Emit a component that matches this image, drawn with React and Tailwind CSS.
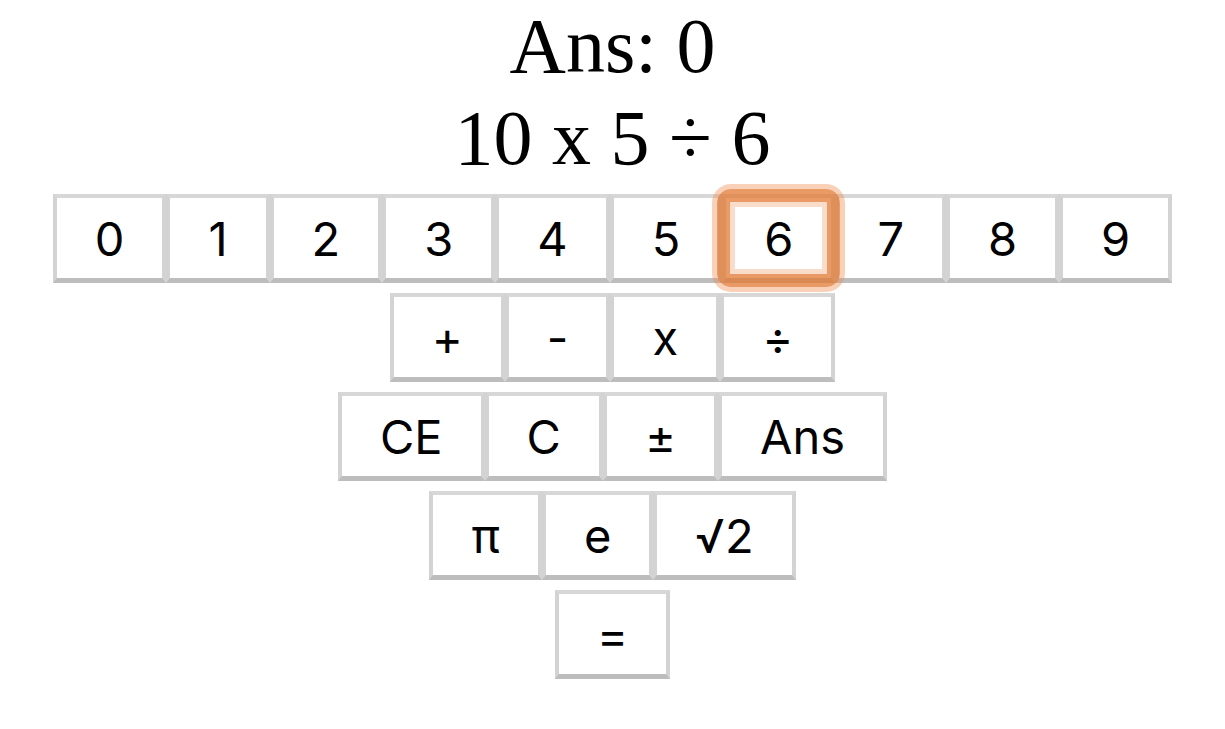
import React, { useState } from 'react'

const rows = [
    ['0', '1', '2', '3', '4', '5', '6', '7', '8', '9'],
    ['+', '-', 'x', '÷'],
    ['CE', 'C', '±', 'Ans'],
    ['π', 'e', '√2'],
    ['='],
]

function Key({ label, focused }) {
    return (
        <button className="relative h-[89px] px-[38px] bg-white text-black text-[47px] leading-none border-4 border-b-[5px] border-[#d3d3d3] border-t-[#d7d7d7] border-b-[#bdbdbd]">
            {label}
            {focused && (
                <span className="absolute z-10 -inset-[9px] rounded-[14px] border-[13px] border-[rgba(226,120,50,0.75)] shadow-[0_0_0_5px_rgba(240,140,80,0.4),inset_0_0_0_5px_rgba(240,140,80,0.3)] pointer-events-none" />
            )}
        </button>
    )
}

export default function App() {
    const [ ans ] = useState(0)
    const [ expr ] = useState('10 x 5 ÷ 6')

    return (
        <div className="min-h-screen bg-white flex flex-col items-center" style={{ fontFamily: 'Inter, "Liberation Sans", Arial, sans-serif' }}>
            <div className="text-center text-black text-[78px] leading-[92px]" style={{ fontFamily: '"Liberation Serif", "Times New Roman", serif' }}>
                <div>Ans: {ans}</div>
                <div>{expr}</div>
            </div>
            <div className="mt-[10px] flex flex-col items-center gap-[10px]">
                {rows.map((row, i) => (
                    <div key={i} className="flex justify-center">
                        {row.map(k => <Key key={k} label={k} focused={k === '6'} />)}
                    </div>
                ))}
            </div>
        </div>
    )
}
